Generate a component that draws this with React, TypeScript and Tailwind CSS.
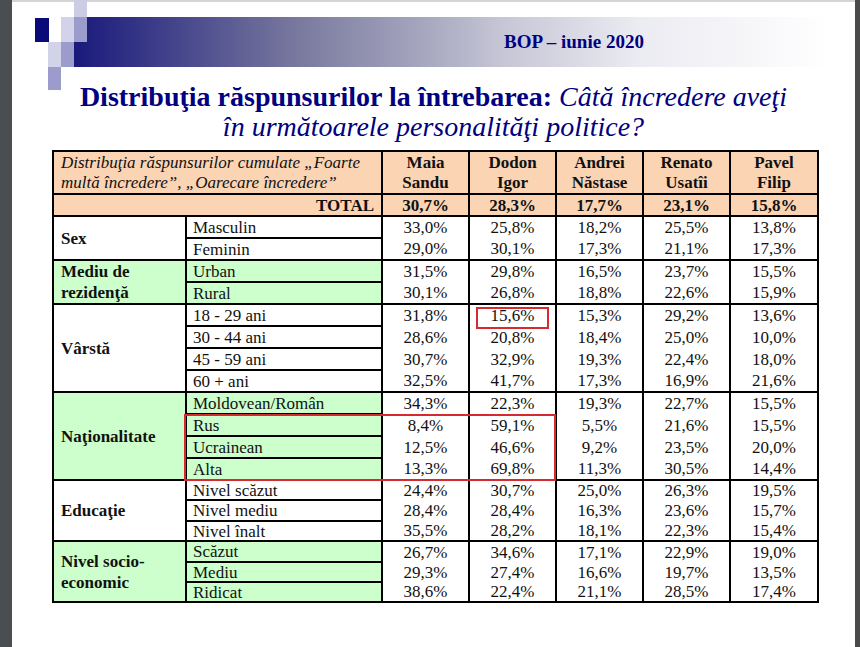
import React from 'react';

type Group = {
  label: React.ReactNode;
  green: boolean;
  rows: { name: string; values: string[]; h: number }[];
};

const candidates = [
  ['Maia', 'Sandu'],
  ['Dodon', 'Igor'],
  ['Andrei', 'Năstase'],
  ['Renato', 'Usatîi'],
  ['Pavel', 'Filip'],
];

const totals = ['30,7%', '28,3%', '17,7%', '23,1%', '15,8%'];

const groups: Group[] = [
  {
    label: 'Sex',
    green: false,
    rows: [
      { name: 'Masculin', values: ['33,0%', '25,8%', '18,2%', '25,5%', '13,8%'], h: 22 },
      { name: 'Feminin', values: ['29,0%', '30,1%', '17,3%', '21,1%', '17,3%'], h: 22 },
    ],
  },
  {
    label: (
      <>
        Mediu de
        <br />
        rezidenţă
      </>
    ),
    green: true,
    rows: [
      { name: 'Urban', values: ['31,5%', '29,8%', '16,5%', '23,7%', '15,5%'], h: 22 },
      { name: 'Rural', values: ['30,1%', '26,8%', '18,8%', '22,6%', '15,9%'], h: 22 },
    ],
  },
  {
    label: 'Vârstă',
    green: false,
    rows: [
      { name: '18 - 29 ani', values: ['31,8%', '15,6%', '15,3%', '29,2%', '13,6%'], h: 22 },
      { name: '30 - 44 ani', values: ['28,6%', '20,8%', '18,4%', '25,0%', '10,0%'], h: 22 },
      { name: '45 - 59 ani', values: ['30,7%', '32,9%', '19,3%', '22,4%', '18,0%'], h: 22 },
      { name: '60 + ani', values: ['32,5%', '41,7%', '17,3%', '16,9%', '21,6%'], h: 22 },
    ],
  },
  {
    label: 'Naţionalitate',
    green: true,
    rows: [
      { name: 'Moldovean/Român', values: ['34,3%', '22,3%', '19,3%', '22,7%', '15,5%'], h: 22 },
      { name: 'Rus', values: ['8,4%', '59,1%', '5,5%', '21,6%', '15,5%'], h: 22 },
      { name: 'Ucrainean', values: ['12,5%', '46,6%', '9,2%', '23,5%', '20,0%'], h: 22 },
      { name: 'Alta', values: ['13,3%', '69,8%', '11,3%', '30,5%', '14,4%'], h: 22 },
    ],
  },
  {
    label: 'Educaţie',
    green: false,
    rows: [
      { name: 'Nivel scăzut', values: ['24,4%', '30,7%', '25,0%', '26,3%', '19,5%'], h: 20 },
      { name: 'Nivel mediu', values: ['28,4%', '28,4%', '16,3%', '23,6%', '15,7%'], h: 21 },
      { name: 'Nivel înalt', values: ['35,5%', '28,2%', '18,1%', '22,3%', '15,4%'], h: 20 },
    ],
  },
  {
    label: (
      <>
        Nivel socio-
        <br />
        economic
      </>
    ),
    green: true,
    rows: [
      { name: 'Scăzut', values: ['26,7%', '34,6%', '17,1%', '22,9%', '19,0%'], h: 21 },
      { name: 'Mediu', values: ['29,3%', '27,4%', '16,6%', '19,7%', '13,5%'], h: 20 },
      { name: 'Ridicat', values: ['38,6%', '22,4%', '21,1%', '28,5%', '17,4%'], h: 20 },
    ],
  },
];

function Logo() {
  // corner squares of the slide template
  return (
    <svg className="absolute left-[11px] top-0" width="64" height="92" viewBox="0 0 64 92">
      <rect x="51" y="0" width="13" height="17" fill="#ccccE4" />
      <rect x="12" y="18" width="14" height="24" fill="#0a0a78" />
      <rect x="38" y="17" width="13" height="25" fill="#d2d2e8" />
      <rect x="51" y="17" width="13" height="25" fill="#9c9ccc" />
      <rect x="25" y="42" width="13" height="25" fill="#d2d2e8" />
      <rect x="38" y="42" width="13" height="25" fill="#9c9ccc" />
      <rect x="25" y="67" width="13" height="23" fill="#9c9ccc" />
    </svg>
  );
}

export default function App() {
  return (
    <div className="flex h-[647px] w-[860px] bg-white [font-family:Liberation_Serif,serif] text-[#111]">
      <div className="w-[12px] shrink-0 bg-[#4b4e50]" />
      <div className="relative flex-1">
        <div className="h-[2px] bg-[#d4d4d4]" />
        <Logo />
        {/* Title bar */}
        <div className="ml-[50px] mr-[25px] mt-[15px] flex h-[50px] items-center bg-[linear-gradient(to_right,#14147a_0%,#7a7a9f_31%,#a9a9c1_48%,#c5c5d5_57%,#ebebf2_75%,#ffffff_100%)] pl-[442px]">
          <span className="text-[19px] font-bold text-[#000080]">BOP – iunie 2020</span>
        </div>

        <h1 className="mt-[15px] text-center text-[28px] leading-[30px] text-[#000080]">
          <span className="font-bold">Distribuţia răspunsurilor la întrebarea: </span>
          <span className="italic">Câtă încredere aveţi</span>
          <br />
          <span className="italic">în următoarele personalităţi politice?</span>
        </h1>

        <div className="relative ml-[40px] mt-[8px] w-[765px]">
          <table className="w-[765px] table-fixed border-collapse border-2 border-black text-[17px]">
            <colgroup>
              <col className="w-[133px]" />
              <col className="w-[196px]" />
              <col className="w-[87px]" />
              <col className="w-[87px]" />
              <col className="w-[87px]" />
              <col className="w-[87px]" />
              <col className="w-[88px]" />
            </colgroup>
            <thead>
              <tr className="h-[43px] bg-[#fbd4b4]">
                <th
                  colSpan={2}
                  className="border-2 border-black px-[7px] text-left text-[17px] font-normal italic leading-[20px]"
                >
                  Distribuţia răspunsurilor cumulate „Foarte
                  <br />
                  multă încredere”, „Oarecare încredere”
                </th>
                {candidates.map(([a, b]) => (
                  <th key={a} className="border-2 border-black text-center font-bold leading-[20px]">
                    {a}
                    <br />
                    {b}
                  </th>
                ))}
              </tr>
              <tr className="h-[22px] bg-[#fbd4b4] font-bold">
                <td colSpan={2} className="border-2 border-black px-[7px] text-right leading-none">
                  TOTAL
                </td>
                {totals.map((t) => (
                  <td key={t} className="border-2 border-black text-center leading-none">
                    {t}
                  </td>
                ))}
              </tr>
            </thead>
            <tbody>
              {groups.map((g, gi) =>
                g.rows.map((r, ri) => (
                  <tr key={`${gi}-${ri}`} style={{ height: r.h }}>
                    {ri === 0 && (
                      <td
                        rowSpan={g.rows.length}
                        className={`border-2 border-black px-[7px] font-bold leading-[21px] ${
                          g.green ? 'bg-[#ccffcc]' : 'bg-white'
                        }`}
                      >
                        {g.label}
                      </td>
                    )}
                    <td
                      className={`border-2 border-black px-[6px] leading-none ${
                        g.green ? 'bg-[#ccffcc]' : 'bg-white'
                      }`}
                    >
                      {r.name}
                    </td>
                    {r.values.map((v, vi) => (
                      <td
                        key={vi}
                        className={`border-x-2 border-black text-center leading-none ${
                          ri === 0 ? 'border-t-2' : ''
                        } ${ri === g.rows.length - 1 ? 'border-b-2' : ''}`}
                      >
                        {v}
                      </td>
                    ))}
                  </tr>
                ))
              )}
            </tbody>
          </table>

          {/* highlighted cells */}
          <div className="absolute left-[424px] top-[157px] h-[22px] w-[73px] border-2 border-[#d42a30]" />
          <div className="absolute left-[132px] top-[264px] h-[67px] w-[372px] border-2 border-[#d42a30]" />
        </div>
      </div>
      <div className="w-[5px] shrink-0 bg-[#4a4a4a]" />
    </div>
  );
}
